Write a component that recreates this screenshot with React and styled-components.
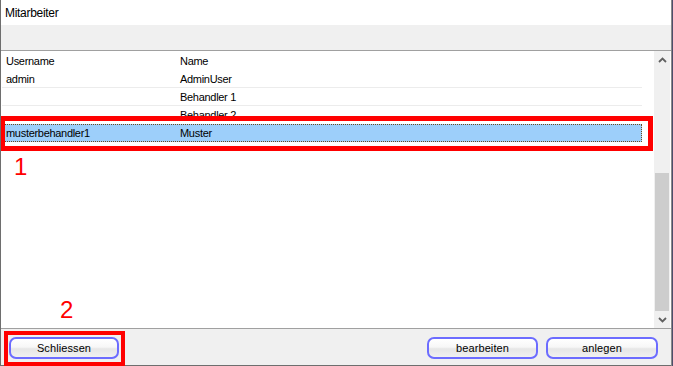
import React from 'react';
import styled, { createGlobalStyle } from 'styled-components';

const GlobalStyle = createGlobalStyle`
  html, body {
    margin: 0;
    padding: 0;
    background: #4d4d6a;
  }
  body {
    font-family: "Liberation Sans", Arial, sans-serif;
  }
`;

const Window = styled.div`
  position: relative;
  width: 672px;
  height: 366px;
  display: flex;
  flex-direction: column;
  background: #ffffff;
  border-left: 1px solid #6e6e6e;
  border-right: 1px solid #8a8a8a;
  box-sizing: border-box;
  overflow: hidden;
`;

const TitleBar = styled.div`
  height: 25px;
  display: flex;
  align-items: center;
  padding-left: 4px;
  font-size: 12px;
  letter-spacing: -0.3px;
  color: #000;
  background: #fff;
`;

const ToolBand = styled.div`
  height: 25px;
  background: #f0f0f0;
  border-bottom: 1px solid #a0a0a0;
`;

const ListArea = styled.div`
  height: 277px;
  display: flex;
  background: #fff;
  padding-right: 1px;
`;

const Table = styled.div`
  flex: 1;
  padding: 1px 12px 0 1px;
`;

const Row = styled.div`
  display: grid;
  grid-template-columns: 174px 1fr;
  height: 18px;
  align-items: center;
  font-size: 11px;
  letter-spacing: -0.3px;
  color: #000;
  padding-left: 4px;
  box-sizing: border-box;
  border-bottom: 1px solid ${p => (p.line ? '#ececec' : 'transparent')};
  background: ${p => (p.selected ? '#9dcffa' : 'transparent')};
  outline: ${p => (p.selected ? '1px dotted #6b4a1f' : 'none')};
  outline-offset: -1px;
`;

const Scrollbar = styled.div`
  width: 16px;
  display: flex;
  flex-direction: column;
  background: #f0f0f0;
`;

const Arrow = styled.div`
  height: 17px;
  display: flex;
  align-items: center;
  justify-content: center;
`;

const Track = styled.div`
  flex: 1;
  display: flex;
  flex-direction: column;
  justify-content: flex-end;
`;

const Thumb = styled.div`
  height: 138px;
  margin: 0 1px;
  background: #cdcdcd;
`;

const Footer = styled.div`
  flex: 1;
  display: flex;
  align-items: flex-start;
  padding: 8px 13px 0 8px;
  background: #f0f0f0;
  border-top: 1px solid #a0a0a0;
  border-bottom: 1px solid #6e6e6e;
  gap: 8px;
`;

const Button = styled.button`
  width: ${p => p.w}px;
  height: 22px;
  margin-left: ${p => (p.push ? 'auto' : '0')};
  border: 2px solid #6c6cff;
  border-radius: 7px;
  background: linear-gradient(#ffffff 0%, #f7f7f7 45%, #e6e6e6 55%, #f0f0f0 100%);
  font-family: "Liberation Sans", Arial, sans-serif;
  font-size: 11px;
  letter-spacing: 0.1px;
  color: #000;
  padding: 0;
`;

const Mark = styled.div`
  position: absolute;
  left: ${p => p.x}px;
  top: ${p => p.y}px;
  width: ${p => p.w}px;
  height: ${p => p.h}px;
  border: ${p => p.b}px solid #ff0000;
  box-sizing: border-box;
  pointer-events: none;
`;

const Label = styled.div`
  position: absolute;
  left: ${p => p.x}px;
  top: ${p => p.y}px;
  color: #ff0000;
  font-size: 24px;
  line-height: 24px;
  font-family: "Liberation Sans", Arial, sans-serif;
`;

const Chevron = ({ down }) => (
  <svg width="9" height="6" viewBox="0 0 9 6">
    <path
      d={down ? 'M1 1 L4.5 4.5 L8 1' : 'M1 5 L4.5 1.5 L8 5'}
      fill="none"
      stroke="#606060"
      strokeWidth="1.8"
    />
  </svg>
);

const rows = [
  { user: 'admin', name: 'AdminUser', line: true },
  { user: '', name: 'Behandler 1', line: true },
  { user: '', name: 'Behandler 2' },
  { user: 'musterbehandler1', name: 'Muster', selected: true },
];

export default function App() {
  return (
    <>
      <GlobalStyle />
      <Window>
        <TitleBar>Mitarbeiter</TitleBar>
        <ToolBand />
        <ListArea>
          <Table>
            <Row>
              <span>Username</span>
              <span>Name</span>
            </Row>
            {rows.map((r, i) => (
              <Row key={i} line={r.line} selected={r.selected}>
                <span>{r.user}</span>
                <span>{r.name}</span>
              </Row>
            ))}
          </Table>
          <Scrollbar>
            <Arrow><Chevron /></Arrow>
            <Track><Thumb /></Track>
            <Arrow><Chevron down /></Arrow>
          </Scrollbar>
        </ListArea>
        <Footer>
          <Button w={110}>Schliessen</Button>
          <Button w={111} push>bearbeiten</Button>
          <Button w={112}>anlegen</Button>
        </Footer>
        <Mark x={-1} y={116} w={653} h={35} b={5} />
        <Label x={13} y={155}>1</Label>
        <Mark x={3} y={331} w={121} h={35} b={4} />
        <Label x={59} y={298}>2</Label>
      </Window>
    </>
  );
}
